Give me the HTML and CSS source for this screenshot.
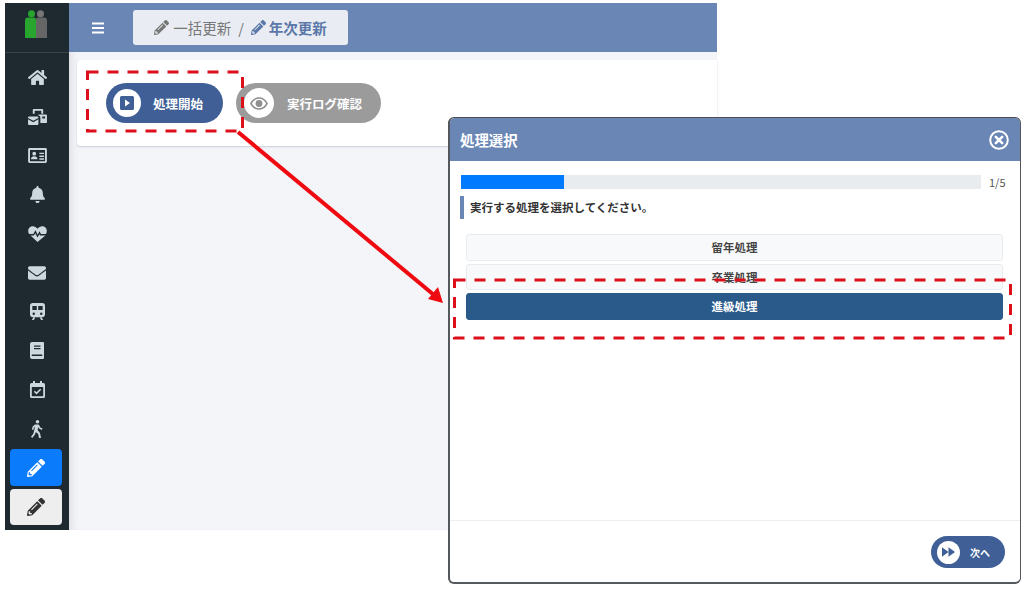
FILE: index.html
```html
<!DOCTYPE html>
<html lang="ja">
<head>
    <meta charset="UTF-8">
    <title>年次更新</title>
    <link rel="stylesheet" href="styles.css">
</head>
<body>
    <div class="stage">
        <!-- 背景の画面 -->
        <div class="app">
            <nav class="sidebar">
                <div class="logo">
                    <svg viewBox="0 0 22 28" width="22" height="28">
                        <circle cx="15.500" cy="3.800" r="3.500" fill="#777"/>
                        <path d="M11 9.500q0-2 2-2h6q3 0 3 3V28H11z" fill="#666"/>
                        <circle cx="6.500" cy="3.800" r="3.500" fill="#27a52f"/>
                        <path d="M0 10.500q0-3 3-3h6q2 0 2 2V28H0z" fill="#27a52f"/>
                    </svg>
                </div>
                <ul class="menu">
                    <li><svg class="ico" viewBox="0 0 576 512" width="19" height="17"><path d="M280.37 148.26L96 300.11V464a16 16 0 0 0 16 16l112.06-.29a16 16 0 0 0 15.92-16V368a16 16 0 0 1 16-16h64a16 16 0 0 1 16 16v95.64a16 16 0 0 0 16 16.05L464 480a16 16 0 0 0 16-16V300L295.67 148.26a12.19 12.19 0 0 0-15.3 0zM571.6 251.47L488 182.56V44.05a12 12 0 0 0-12-12h-56a12 12 0 0 0-12 12v72.61L318.47 43a48 48 0 0 0-61 0L4.34 251.47a12 12 0 0 0-1.6 16.9l25.5 31A12 12 0 0 0 45.15 301l235.22-193.74a12.19 12.19 0 0 1 15.3 0L530.9 301a12 12 0 0 0 16.9-1.6l25.5-31a12 12 0 0 0-1.7-16.93z"/></svg></li>
                    <li><svg class="ico" viewBox="0 0 20 18" width="19" height="17"><path d="M6 1h9a1 1 0 0 1 1 1v4h-2V3H7v3H5V2a1 1 0 0 1 1-1zM11 7h8a1 1 0 0 1 1 1v7a1 1 0 0 1-1 1h-6v-6a2 2 0 0 0-2-2V7zM15 9v2h3V9zM1 9h9a1 1 0 0 1 1 1v.6l-5.5 3-5.5-3V10a1 1 0 0 1 1-1zM0 12l5.5 3 5.5-3v5a1 1 0 0 1-1 1H1a1 1 0 0 1-1-1z"/></svg></li>
                    <li><svg class="ico" viewBox="0 0 20 16" width="19" height="15"><path fill-rule="evenodd" d="M1.500 0h17A1.500 1.500 0 0 1 20 1.500v13a1.500 1.500 0 0 1-1.500 1.500h-17A1.500 1.500 0 0 1 0 14.500v-13A1.500 1.500 0 0 1 1.500 0zM2 2v12h16V2zM6.500 4a2 2 0 1 1 0 4 2 2 0 0 1 0-4zM3 12c0-2 1.500-3.200 3.500-3.200S10 10 10 12zM12 5h5v1.500h-5zM12 8h5v1.500h-5zM12 11h5v1.500h-5z"/></svg></li>
                    <li><svg class="ico" viewBox="0 0 448 512" width="15" height="17"><path d="M224 512c35.32 0 63.97-28.65 63.97-64H160.03c0 35.35 28.65 64 63.97 64zm215.39-149.71c-19.32-20.76-55.47-51.99-55.47-154.29 0-77.7-54.48-139.9-127.94-155.16V32c0-17.67-14.32-32-31.98-32s-31.98 14.33-31.98 32v20.84C118.56 68.1 64.08 130.3 64.08 208c0 102.3-36.15 133.53-55.47 154.29-6 6.45-8.66 14.16-8.61 21.71.11 16.4 12.98 32 32.1 32h383.8c19.12 0 32-15.6 32.1-32 .05-7.55-2.61-15.27-8.61-21.71z"/></svg></li>
                    <li><svg class="ico" viewBox="0 0 20 17" width="19" height="16"><path d="M10 17L2.600 10h3.700l1.300-2.400 2.400 4.600 1.900-3.400.7 1.200h5.800zM1 8.500C-.8 5.500.2 1.500 3.200.5 5.700-.3 8.300.6 10 2.800 11.700.6 14.300-.3 16.800.5c3 1 4 5 2.200 8h-5.300l-1.600-2.800-1.900 3.500-2.400-4.600-2.200 3.900z"/></svg></li>
                    <li><svg class="ico" viewBox="0 0 512 512" width="18" height="18"><path d="M502.3 190.8c3.9-3.1 9.700-.2 9.700 4.700V400c0 26.500-21.500 48-48 48H48c-26.500 0-48-21.500-48-48V195.600c0-5 5.700-7.800 9.700-4.700 22.400 17.400 52.100 39.500 154.100 113.600 21.100 15.400 56.700 47.800 92.200 47.600 35.700.3 72-32.800 92.300-47.600 102-74.100 131.600-96.300 154-113.700zM256 320c23.200.4 56.600-29.200 73.400-41.400 132.700-96.300 142.800-104.700 173.400-128.700 5.800-4.500 9.200-11.500 9.200-18.900v-19c0-26.500-21.500-48-48-48H48C21.500 64 0 85.500 0 112v19c0 7.400 3.400 14.300 9.200 18.900 30.600 23.900 40.700 32.400 173.400 128.700 16.800 12.200 50.200 41.800 73.400 41.400z"/></svg></li>
                    <li><svg class="ico" viewBox="0 0 16 18" width="15" height="17"><path fill-rule="evenodd" d="M3 0h10a3 3 0 0 1 3 3v9a3 3 0 0 1-3 3H3a3 3 0 0 1-3-3V3a3 3 0 0 1 3-3zM2.500 3v4.500h4.700V3zM8.800 3v4.500h4.700V3zM4 10a1.300 1.300 0 1 0 0 2.600A1.300 1.300 0 0 0 4 10zM12 10a1.300 1.300 0 1 0 0 2.600 1.300 1.300 0 0 0 0-2.600zM3.500 15.500h2L4.200 18H2zM10.500 15.500h2L14 18h-2.200z"/></svg></li>
                    <li><svg class="ico" viewBox="0 0 14 17" width="14" height="17"><path fill-rule="evenodd" d="M2 0h11a1 1 0 0 1 1 1v15a1 1 0 0 1-1 1H2a2 2 0 0 1-2-2V2a2 2 0 0 1 2-2zM4 3.500v1.200h6.500V3.500zM4 6v1.200h6.500V6zM1.800 12.500v1.500h10.500v-1.500z"/></svg></li>
                    <li><svg class="ico" viewBox="0 0 15 17" width="15" height="17"><path fill-rule="evenodd" d="M3 0h2v2h5V0h2v2h1.500A1.500 1.500 0 0 1 15 3.500v12a1.500 1.500 0 0 1-1.500 1.500h-12A1.500 1.500 0 0 1 0 15.500v-12A1.500 1.500 0 0 1 1.500 2H3zM1.800 6v9.200h11.400V6zM6.500 13.500L3.800 10.800l1.100-1.100 1.600 1.600 3.600-3.600 1.100 1.100z"/></svg></li>
                    <li><svg class="ico" viewBox="0 0 12 18" width="12" height="18"><path d="M6.500 0a1.800 1.800 0 1 1 0 3.600 1.800 1.800 0 0 1 0-3.600zM4 4.500h3c.6 0 1 .3 1.300.8l1 2.200L11.500 8.600l-.7 1.300-2.700-1.400-.8-1.500-.7 3L9 13l1 5H8L7.200 14 4.800 12l-.8 2.500L1.200 18 0 16.700l2.300-3L4 7 3 7.500 2.300 10 .8 9.600 1.700 6.500z"/></svg></li>
                </ul>
                <div class="mode mode-active"><svg viewBox="0 0 512 512" width="18" height="18"><use href="#pencil"/></svg></div>
                <div class="mode mode-plain"><svg viewBox="0 0 512 512" width="18" height="18"><use href="#pencil"/></svg></div>
            </nav>
            <div class="main">
                <header class="topbar">
                    <svg class="bars" viewBox="0 0 13 12" width="12" height="12"><path d="M0 0h13v2.200H0zM0 4.900h13v2.200H0zM0 9.800h13V12H0z"/></svg>
                    <div class="crumb">
                        <svg viewBox="0 0 512 512" width="15" height="15"><use href="#pencil"/></svg>
                        <span>一括更新</span>
                        <span class="crumb-sep">/</span>
                        <span class="crumb-current">
                            <svg viewBox="0 0 512 512" width="15" height="15"><use href="#pencil"/></svg>
                            年次更新
                        </span>
                    </div>
                </header>
                <div class="content">
                    <div class="card">
                        <button class="pill pill-blue">
                            <span class="pill-icon">
                                <svg viewBox="0 0 14 14" width="14" height="14"><path fill="#3f5f96" fill-rule="evenodd" d="M1.500 0h11A1.500 1.500 0 0 1 14 1.500v11a1.500 1.500 0 0 1-1.500 1.500h-11A1.500 1.500 0 0 1 0 12.500v-11A1.500 1.500 0 0 1 1.500 0zM5 3.500v7l5-3.500z"/></svg>
                            </span>
                            処理開始
                        </button>
                        <button class="pill pill-gray">
                            <span class="pill-icon">
                                <svg viewBox="0 0 20 14" width="18" height="13"><path fill="#8f8f8f" fill-rule="evenodd" d="M10 0c4.500 0 8 2.800 10 7-2 4.200-5.500 7-10 7S2 11.200 0 7c2-4.200 5.500-7 10-7zM10 1.800C6.700 1.800 3.900 3.700 2.100 7c1.800 3.300 4.600 5.200 7.900 5.200s6.100-1.900 7.900-5.200c-1.800-3.300-4.600-5.200-7.900-5.200zM10 3.200a3.800 3.800 0 1 1 0 7.600 3.800 3.800 0 0 1 0-7.600z"/></svg>
                            </span>
                            実行ログ確認
                        </button>
                    </div>
                </div>
            </div>
        </div>

        <!-- 処理選択ダイアログ -->
        <div class="modal">
            <div class="modal-head">
                <span>処理選択</span>
                <svg viewBox="0 0 20 20" width="20" height="20"><circle cx="10" cy="10" r="8.800" fill="none" stroke="#fff" stroke-width="2"/><path d="M6.800 6.800l6.400 6.400M13.200 6.800l-6.400 6.400" stroke="#fff" stroke-width="2.600" stroke-linecap="round"/></svg>
            </div>
            <div class="modal-body">
                <div class="progress-row">
                    <div class="progress"><div class="progress-bar"></div></div>
                    <span class="progress-text">1/5</span>
                </div>
                <p class="prompt">実行する処理を選択してください。</p>
                <div class="options">
                    <div class="option">留年処理</div>
                    <div class="option">卒業処理</div>
                    <div class="option option-on">進級処理</div>
                </div>
            </div>
            <div class="modal-foot">
                <button class="pill pill-blue pill-small">
                    <span class="pill-icon">
                        <svg viewBox="0 0 14 10" width="13" height="10"><path fill="#3f5f96" d="M0 0l7 5-7 5zM7 0l7 5-7 5z"/></svg>
                    </span>
                    次へ
                </button>
            </div>
        </div>

        <!-- 赤い注釈 -->
        <svg class="marks" viewBox="0 0 1024 591" width="1024" height="591">
            <g fill="none" stroke-width="3">
                <rect x="87.500" y="72" width="155" height="59" stroke="#dc0f1a" stroke-dasharray="11 9"/>
                <rect x="454.500" y="280" width="556" height="58" stroke="#dc0f1a" stroke-dasharray="11 9"/>
                <path d="M238 132L434 295" stroke="#ee0a10" stroke-width="4"/>
            </g>
            <path d="M443 303L428 299L438 287z" fill="#ee0a10"/>
        </svg>

        <svg class="defs"><defs><path id="pencil" d="M497.900 142.100l-46.100 46.100c-4.700 4.700-12.300 4.700-17 0l-111-111c-4.700-4.700-4.700-12.300 0-17l46.100-46.100c18.700-18.700 49.100-18.700 67.900 0l60.100 60.100c18.800 18.700 18.800 49.100 0 67.900zM284.200 99.800L21.600 362.400.4 483.900c-2.900 16.400 11.400 30.600 27.800 27.800l121.500-21.300 262.600-262.600c4.700-4.700 4.700-12.300 0-17l-111-111c-4.800-4.700-12.400-4.700-17.100 0zM124.100 339.900c-5.500-5.500-5.500-14.300 0-19.800l154-154c5.500-5.500 14.300-5.500 19.800 0s5.500 14.300 0 19.800l-154 154c-5.500 5.500-14.300 5.500-19.800 0zM88 424h48v36.300l-64.500 11.300-31.100-31.100L51.700 376H88v48z"/></defs></svg>
    </div>
</body>
</html>
```

FILE: styles.css
```css
* {
    box-sizing: border-box;
}
html, body {
    margin: 0;
    background-color: #fff;
    overflow: hidden;
}
body {
    font-family: "Noto Sans CJK JP", "Noto Sans", sans-serif;
    color: #333;
}
button {
    font-family: inherit;
    border: none;
    padding: 0;
}
.stage {
    position: relative;
    width: 1024px;
    height: 591px;
    padding: 3px 0 0 5px;
    overflow: hidden;
}
.defs {
    position: absolute;
    width: 0;
    height: 0;
}
.marks {
    position: absolute;
    left: 0;
    top: 0;
    pointer-events: none;
}

/* 背景の画面 */
.app {
    display: flex;
    width: 712px;
    height: 527px;
}
.sidebar {
    width: 64px;
    flex: none;
    background-color: #1f2a30;
    display: flex;
    flex-direction: column;
    align-items: center;
    padding-right: 2px;
}
.logo {
    width: 64px;
    margin-right: -2px;
    height: 50px;
    padding: 7px 2px 0 0;
    display: flex;
    justify-content: center;
    border-bottom: 1px solid #3a454b;
}
.menu {
    list-style: none;
    margin: 5px 0 0;
    padding: 0;
}
.menu li {
    width: 52px;
    height: 39px;
    padding-left: 2px;
    display: flex;
    align-items: center;
    justify-content: center;
}
.ico {
    fill: #cdd8de;
}
.mode {
    width: 52px;
    display: flex;
    align-items: center;
    justify-content: center;
    border-radius: 4px;
}
.mode-active {
    height: 37px;
    margin-top: 1px;
    background-color: #0a7bfb;
    fill: #fff;
}
.mode-plain {
    height: 36px;
    margin-top: 3px;
    background-color: #eeeeee;
    fill: #333;
}
.main {
    flex: 1;
    display: flex;
    flex-direction: column;
    background-color: #f4f5f9;
    box-shadow: inset 8px 0 8px -6px #d9dbe2;
}
.topbar {
    height: 49px;
    flex: none;
    background-color: #6a86b5;
    display: flex;
    align-items: center;
    padding-left: 23px;
}
.bars {
    fill: #fff;
}
.crumb {
    margin-left: 29px;
    width: 215px;
    height: 35px;
    display: flex;
    align-items: center;
    justify-content: center;
    gap: 4px;
    background-color: #e9edf3;
    border-radius: 3px;
    font-size: 14.500px;
    color: #777;
    fill: #777;
}
.crumb-sep {
    margin: 0 3px;
}
.crumb-current {
    display: flex;
    align-items: center;
    gap: 3px;
    font-weight: 700;
    color: #5b78a8;
    fill: #5b78a8;
}
.content {
    flex: 1;
    padding: 8px 0 0 8px;
}
.card {
    height: 86px;
    background-color: #fff;
    border-radius: 4px 0 0 4px;
    box-shadow: 0 1px 2px #c9ccd3;
    padding: 23px 0 0 29px;
    display: flex;
    align-items: flex-start;
    gap: 13px;
}
.pill {
    height: 40px;
    border-radius: 20px;
    display: flex;
    align-items: center;
    color: #fff;
    font-size: 12.500px;
    font-weight: 700;
    white-space: nowrap;
    padding: 0 0 0 7px;
    gap: 12px;
}
.pill-blue {
    width: 117px;
    background-color: #3f5f96;
}
.pill-gray {
    width: 145px;
    background-color: #9b9b9b;
    gap: 13px;
    padding-left: 8px;
}
.pill-icon {
    width: 28px;
    height: 28px;
    flex: none;
    border-radius: 50%;
    background-color: #fff;
    display: flex;
    align-items: center;
    justify-content: center;
}
.pill-gray .pill-icon {
    width: 30px;
    height: 30px;
}

/* ダイアログ */
.modal {
    position: absolute;
    left: 448px;
    top: 118px;
    width: 573px;
    height: 466px;
    background-color: #fff;
    border: 2px solid #55595e;
    border-top: none;
    border-right-width: 1px;
    border-radius: 6px;
    box-shadow: 0 -1px 0 #4a4f55;
    display: flex;
    flex-direction: column;
}
.modal-head {
    height: 43px;
    flex: none;
    background-color: #6a86b5;
    border-radius: 5px 5px 0 0;
    color: #fff;
    font-size: 14.400px;
    font-weight: 700;
    display: flex;
    align-items: center;
    justify-content: space-between;
    padding: 0 11px 0 10px;
}
.modal-body {
    flex: 1;
    padding: 14px 0 0 11px;
}
.progress-row {
    display: flex;
    align-items: center;
    height: 14px;
}
.progress {
    width: 520px;
    flex: none;
    height: 14px;
    background-color: #e9ecef;
}
.progress-bar {
    width: 103px;
    height: 100%;
    background-color: #007bff;
}
.progress-text {
    margin-left: 8px;
    font-size: 11px;
    color: #555;
}
.prompt {
    margin: 7px 0 0 -1px;
    height: 23px;
    padding-left: 6px;
    border-left: 4px solid #6a86b5;
    font-size: 11.500px;
    font-weight: 700;
    line-height: 23px;
    color: #333;
}
.options {
    margin: 15px 0 0 5px;
    width: 537px;
    display: flex;
    flex-direction: column;
    gap: 3px;
}
.option {
    height: 26.500px;
    border: 1px solid #e9ecef;
    border-radius: 3px;
    background-color: #f8f9fa;
    font-size: 11.500px;
    font-weight: 700;
    line-height: 24.500px;
    text-align: center;
    color: #444;
}
.option-on {
    border-color: #2a5a8a;
    background-color: #2a5a8a;
    color: #fff;
}
.modal-foot {
    height: 62px;
    flex: none;
    border-top: 1px solid #eceef0;
    padding: 15px 15px 0 0;
    display: flex;
    justify-content: flex-end;
}
.pill-small {
    width: 74px;
    height: 32px;
    font-size: 10px;
    padding: 0 0 0 6px;
    gap: 10px;
}
.pill-small .pill-icon {
    width: 23px;
    height: 23px;
}
```
